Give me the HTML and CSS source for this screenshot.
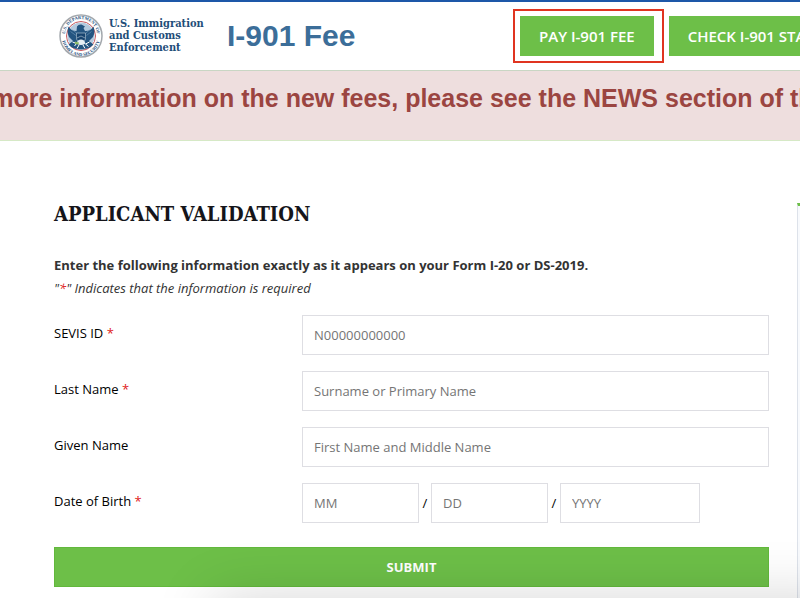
FILE: index.html
```
<!DOCTYPE html>
<html lang="en">
<head>
  <meta charset="UTF-8">
  <title>I-901 Fee | Applicant Validation</title>
  <meta name="viewport" content="width=device-width, initial-scale=1.0">
  <link rel="stylesheet" href="styles.css">
</head>
<body>
  <header class="site-header">
    <div class="brand">
      <svg class="seal" viewBox="0 0 88 88" role="img" aria-label="U.S. Department of Homeland Security">
        <defs>
          <path id="arcTop" d="M13 50A32 32 0 1 1 75 50"/>
          <path id="arcBottom" d="M6 46A38 38 0 0 0 82 46"/>
        </defs>
        <circle cx="44" cy="44" r="42" fill="#fff" stroke="#a3a8ad" stroke-width="3"/>
        <circle cx="44" cy="44" r="29" fill="#fff" stroke="#c9575b" stroke-width="2"/>
        <circle cx="44" cy="44" r="27" fill="#b4cade"/>
        <g class="seal-text">
          <text><textPath href="#arcTop" startOffset="50%" text-anchor="middle">U.S. DEPARTMENT OF</textPath></text>
          <text><textPath href="#arcBottom" startOffset="50%" text-anchor="middle">HOMELAND SECURITY</textPath></text>
        </g>
        <path fill="#245581" d="M19 25Q24 34 35 34L36 25Q39 20 45 21L52 25L49 28L52 34Q64 34 69 25Q73 36 68 46L60 54L69 61Q60 71 44 71Q27 71 19 61L28 54L20 46Q15 36 19 25Z"/>
        <path d="M35 38H53V50Q51 57 44 60Q37 57 35 50Z" fill="#17446f" stroke="#dce8f0" stroke-width="1"/>
        <path d="M36 48L44 44L52 48" fill="none" stroke="#dce8f0" stroke-width="1"/>
        <path d="M27 56L35 59L31 64M61 56L53 60L59 65M40 62L36 69M48 62L52 69" fill="none" stroke="#fff" stroke-width="2"/>
        <path d="M38 53Q44 49 50 53L53 59Q44 65 35 59Z" fill="#e6eef4"/>
        <path d="M32 55L40 57L39 61L32 60Z" fill="#8ebd67"/>
        <path d="M23 35L34 43M65 35L55 43M26 31L35 38M62 31L54 38" stroke="#83a7c4" stroke-width="1"/>
      </svg>
      <div class="agency">U.S. Immigration<br>and Customs<br>Enforcement</div>
      <div class="site-name">I-901 Fee</div>
    </div>
    <nav class="main-nav">
      <div class="nav-current"><a class="nav-link" href="#pay">PAY I-901 FEE</a></div>
      <a class="nav-link" href="#status">CHECK I-901 STATUS</a>
    </nav>
  </header>

  <div class="alert">
    <p class="ticker">For more information on the new fees, please see the NEWS section of the site.</p>
  </div>

  <div class="content">
    <main>
      <h1>APPLICANT VALIDATION</h1>
      <p class="intro">Enter the following information exactly as it appears on your Form I-20 or DS-2019.</p>
      <p class="hint">"<span class="required">*</span>" Indicates that the information is required</p>
      <form id="pay" autocomplete="off">
        <div class="row">
          <label for="sevis">SEVIS ID <span class="required">*</span></label>
          <input type="text" id="sevis" placeholder="N00000000000">
        </div>
        <div class="row">
          <label for="lastName">Last Name <span class="required">*</span></label>
          <input type="text" id="lastName" placeholder="Surname or Primary Name">
        </div>
        <div class="row">
          <label for="givenName">Given Name</label>
          <input type="text" id="givenName" placeholder="First Name and Middle Name">
        </div>
        <div class="row">
          <label for="month">Date of Birth <span class="required">*</span></label>
          <div class="date">
            <input type="text" id="month" placeholder="MM">
            <span>/</span>
            <input type="text" aria-label="Day of birth" placeholder="DD">
            <span>/</span>
            <input class="year" type="text" aria-label="Year of birth" placeholder="YYYY">
          </div>
        </div>
        <button type="submit">SUBMIT</button>
      </form>
    </main>
    <aside class="side-panel"></aside>
  </div>
</body>
</html>
```
FILE: styles.css
```
* {
  box-sizing: border-box;
}
html {
  overflow: hidden;
}
body {
  display: flex;
  flex-direction: column;
  font-family: "Open Sans", "Noto Sans", sans-serif;
  font-size: 13px;
  line-height: 20px;
  background: #fff;
  margin: 0;
  color: #000;
  min-height: 100vh;
  overflow: hidden;
}
/* soft shade along the bottom of the window */
body::after {
  content: "";
  position: fixed;
  left: 212px;
  right: -60px;
  top: 100%;
  height: 80px;
  box-shadow: 0 0 60px rgba(0, 0, 0, 0.16);
  pointer-events: none;
}
h1, p {
  margin: 0;
}

/* header */
.site-header {
  display: flex;
  align-items: center;
  height: 70px;
  border-top: 2px solid #1d57a8;
  overflow: hidden;
}
.brand {
  display: flex;
  align-items: center;
  flex: none;
  width: 513px;
  padding-left: 59px;
}
.seal {
  width: 44px;
  height: 44px;
}
.seal-text {
  font: bold 9px "Liberation Serif", serif;
  fill: #1c4d7c;
}
.agency {
  margin-left: 6px;
  width: 118px;
  font: bold 11px/12px "DejaVu Serif Condensed", "DejaVu Serif", serif;
  color: #1f4e79;
  white-space: nowrap;
}
.site-name {
  font: bold 30px/36px "Liberation Sans", Arial, sans-serif;
  color: #3c6e99;
  white-space: nowrap;
}
.main-nav {
  display: flex;
  align-items: center;
  flex: none;
  gap: 5px;
}
.nav-current {
  border: 2px solid #e03420;
  padding: 5px 8px 5px 5px;
}
.nav-link {
  display: block;
  padding: 0 19px;
  background: #6dbf48;
  color: #fff;
  font-size: 15px;
  font-weight: 600;
  line-height: 40px;
  text-decoration: none;
  white-space: nowrap;
}

/* news ticker */
.alert {
  height: 71px;
  padding-top: 12px;
  background: #eedede;
  border-top: 1px solid #c9d6c4;
  border-bottom: 1px solid #d6e9c6;
  overflow: hidden;
}
.ticker {
  font: bold 25px/30px "Liberation Sans", Arial, sans-serif;
  color: #9b4541;
  text-indent: -56px;
  white-space: nowrap;
}

/* content */
.content {
  flex: 1;
  display: grid;
  grid-template-columns: minmax(0, 1fr) 3px;
  gap: 28px;
  padding: 62px 0 0 54px;
}
h1 {
  font: bold 20px/22px "DejaVu Serif Condensed", "DejaVu Serif", serif;
  color: #15151a;
}
.intro {
  margin-top: 28px;
  font-weight: 700;
  line-height: 24px;
  color: #333;
}
.hint {
  font-style: italic;
  line-height: 22px;
  color: #333;
}
.required {
  color: #e02020;
}
form {
  display: flex;
  flex-direction: column;
  gap: 16px;
  margin-top: 16px;
}
.row {
  display: grid;
  grid-template-columns: 248px minmax(0, 1fr);
  align-items: center;
}
label {
  padding-bottom: 4px;
}
input {
  width: 100%;
  height: 40px;
  padding: 0 11px;
  border: 1px solid #dedee3;
  background: #fff;
  font: inherit;
}
input::placeholder {
  color: #757575;
}
.date {
  display: flex;
  align-items: center;
}
.date input {
  width: 117px;
}
.date .year {
  width: 140px;
}
.date span {
  width: 12px;
  text-align: center;
}
button {
  height: 40px;
  margin-top: 8px;
  border: 1px solid #62b83c;
  background: #6dbf48;
  color: #fff;
  font: 700 13px/20px "Open Sans", sans-serif;
}
.side-panel {
  border-top: 3px solid #6dbf48;
  border-left: 1px solid #dde2ea;
  background: #f8fafd;
}
```
